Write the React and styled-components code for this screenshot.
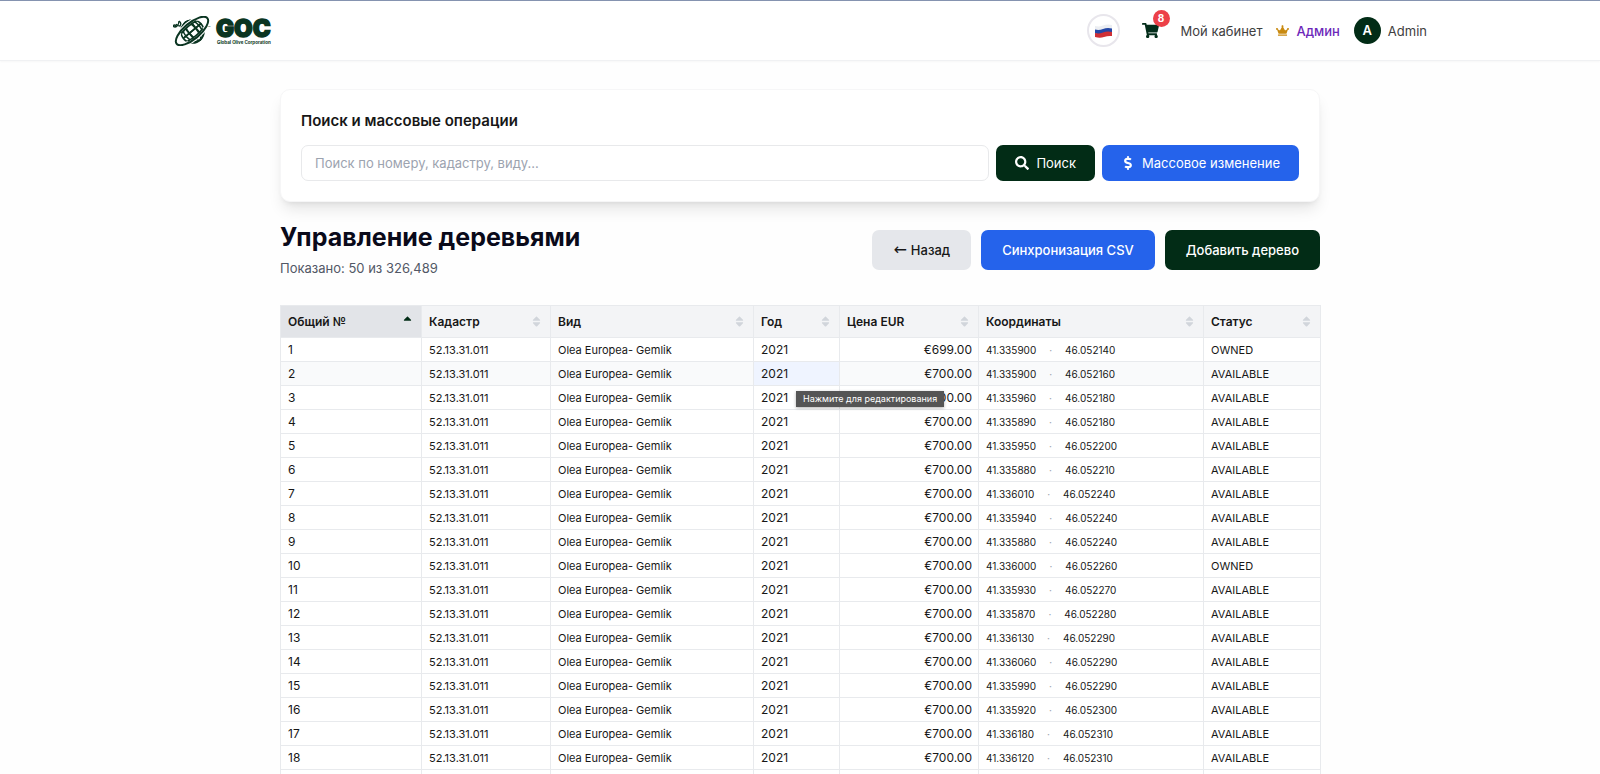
import React, { useState } from 'react';
import styled, { createGlobalStyle } from 'styled-components';
import { FaShoppingCart, FaCrown, FaSearch, FaDollarSign, FaSort, FaSortUp } from 'react-icons/fa';

const GlobalStyle = createGlobalStyle`
  * {
    box-sizing: border-box;
  }

  html {
    scrollbar-width: none;
  }

  body {
    margin: 0;
    background-color: #fefefe;
    color: #171717;
    font-family: Inter, "Liberation Sans", sans-serif;
    font-size: 13px;
  }

  button, input {
    font-family: inherit;
  }
`;

const Header = styled.header`
  border-top: 1px solid #8593b0;
  border-bottom: 1px solid #f0f1f3;
  background-color: #fff;
  box-shadow: 0 1px 2px rgba(0, 0, 0, 0.03);
`;

const HeaderInner = styled.div`
  max-width: 1254px;
  height: 59px;
  margin: 0 auto;
  display: flex;
  align-items: center;
  justify-content: space-between;
`;

const LogoLink = styled.a`
  display: flex;
`;

const Nav = styled.nav`
  display: flex;
  align-items: center;
  gap: 14px;
`;

const LanguageButton = styled.button`
  width: 33px;
  height: 33px;
  margin-right: 8px;
  padding: 0;
  display: flex;
  align-items: center;
  justify-content: center;
  border: 2px solid #e8e6ec;
  border-radius: 50%;
  background-color: #fff;
  cursor: pointer;
`;

const CartLink = styled.a`
  position: relative;
  display: flex;
  margin-right: 8px;
  color: #032d1a;
  font-size: 17px;
`;

const CartBadge = styled.span`
  position: absolute;
  top: -12px;
  right: -11px;
  width: 17px;
  height: 17px;
  border-radius: 50%;
  background-color: #ec4048;
  color: #fff;
  font-size: 10px;
  font-weight: 700;
  line-height: 17px;
  text-align: center;
`;

const NavLink = styled.a`
  display: flex;
  align-items: center;
  gap: 7px;
  color: ${(props) => (props.$admin ? '#6d28b9' : '#404040')};
  font-size: 13px;
  font-weight: ${(props) => (props.$admin ? 500 : 400)};
  text-decoration: none;

  svg {
    color: #c98a10;
  }
`;

const Avatar = styled.span`
  width: 27px;
  height: 27px;
  border-radius: 50%;
  background-color: #022c16;
  color: #fff;
  font-size: 13px;
  font-weight: 600;
  line-height: 27px;
  text-align: center;
`;

const Main = styled.main`
  max-width: 1040px;
  margin: 28px auto 0;
`;

const SearchCard = styled.section`
  padding: 20px;
  border: 1px solid #f6f6f7;
  border-radius: 10px;
  background-color: #fff;
  box-shadow: 0 10px 15px -3px rgba(0, 0, 0, 0.1), 0 4px 6px -4px rgba(0, 0, 0, 0.1);
`;

const CardTitle = styled.h2`
  margin: 0 0 14px;
  font-size: 15px;
  font-weight: 600;
  line-height: 21px;
`;

const SearchForm = styled.form`
  display: flex;
  gap: 7px;
`;

const SearchInput = styled.input`
  flex: 1;
  min-width: 0;
  height: 36px;
  padding: 0 13px;
  border: 1px solid #e8e9eb;
  border-radius: 7px;
  background-color: #fff;
  font-size: 13px;
  outline: none;

  &::placeholder {
    color: #9ca3af;
  }
`;

const colors = {
  green: 'background-color: #022c16; color: #fff;',
  blue: 'background-color: #2563eb; color: #fff;',
  gray: 'background-color: #e5e7eb; color: #171717;',
};

const Button = styled.button`
  height: ${(props) => (props.$large ? 40 : 36)}px;
  padding: 0 ${(props) => (props.$large ? 21 : 19)}px;
  display: flex;
  align-items: center;
  gap: ${(props) => (props.$large ? 4 : 7)}px;
  border: none;
  border-radius: 7px;
  font-size: 13px;
  font-weight: ${(props) => (props.$large ? 500 : 400)};
  white-space: nowrap;
  cursor: pointer;
  ${(props) => colors[props.$color]}

  svg {
    font-size: 14px;
  }
`;

const Arrow = styled.span`
  font-family: "DejaVu Sans", sans-serif;
  font-size: 16px;
  font-weight: 400;
  line-height: 18px;
`;

const PageHeader = styled.div`
  margin: 20px 0 27px;
  display: flex;
  align-items: center;
  justify-content: space-between;
`;

const PageTitle = styled.h1`
  margin: 0;
  color: #0a0a1a;
  font-size: 25px;
  font-weight: 700;
  line-height: 30px;
`;

const PageSubtitle = styled.p`
  margin: 6px 0 0;
  color: #525866;
  font-size: 13px;
  line-height: 20px;
`;

const Actions = styled.div`
  display: flex;
  gap: 10px;
`;

const Table = styled.table`
  width: 100%;
  table-layout: fixed;
  border-collapse: collapse;
`;

const HeadCell = styled.th`
  height: 32px;
  padding: 0 7px;
  border: 1px solid #e8eaed;
  background-color: ${(props) => (props.$active ? '#e2e4e8' : '#f3f4f6')};
  text-align: left;
`;

const SortButton = styled.button`
  width: 100%;
  padding: 0;
  display: flex;
  align-items: center;
  justify-content: space-between;
  border: none;
  background: none;
  color: inherit;
  font-size: 12px;
  font-weight: 600;
  cursor: pointer;

  svg {
    color: ${(props) => (props.$active ? '#022c16' : '#d1d5db')};
    font-size: 13px;
  }
`;

const Row = styled.tr`
  background-color: ${(props) => (props.$hovered ? '#f9fafb' : '#fff')};
`;

const Cell = styled.td`
  position: relative;
  height: 24px;
  padding: 0 6px 0 7px;
  border: 1px solid #e8eaed;
  background-color: ${(props) => (props.$hovered ? '#eff4ff' : 'transparent')};
  font-size: ${(props) => (props.$text ? 11 : 12)}px;
  line-height: 18px;
  text-align: ${(props) => (props.$right ? 'right' : 'left')};
  white-space: nowrap;
`;

const Coordinates = styled.div`
  display: flex;
  align-items: center;
  gap: 13px;
  font-size: 10px;
`;

const Dot = styled.span`
  color: #9ca3af;
`;

const Tooltip = styled.span`
  position: absolute;
  top: 29px;
  left: 42px;
  z-index: 1;
  height: 16px;
  padding: 0 7px;
  background-color: #555;
  box-shadow: 0 1px 3px rgba(0, 0, 0, 0.3);
  color: #fff;
  font-size: 9px;
  line-height: 16px;
`;

const columns = [
  { key: 'number', title: 'Общий №', width: 141 },
  { key: 'cadastre', title: 'Кадастр', width: 129 },
  { key: 'species', title: 'Вид', width: 203 },
  { key: 'year', title: 'Год', width: 86 },
  { key: 'price', title: 'Цена EUR', width: 139 },
  { key: 'coordinates', title: 'Координаты', width: 225 },
  { key: 'status', title: 'Статус', width: 117 },
];

const trees = [
  ['41.335900', '46.052140'],
  ['41.335900', '46.052160'],
  ['41.335960', '46.052180'],
  ['41.335890', '46.052180'],
  ['41.335950', '46.052200'],
  ['41.335880', '46.052210'],
  ['41.336010', '46.052240'],
  ['41.335940', '46.052240'],
  ['41.335880', '46.052240'],
  ['41.336000', '46.052260'],
  ['41.335930', '46.052270'],
  ['41.335870', '46.052280'],
  ['41.336130', '46.052290'],
  ['41.336060', '46.052290'],
  ['41.335990', '46.052290'],
  ['41.335920', '46.052300'],
  ['41.336180', '46.052310'],
  ['41.336120', '46.052310'],
  ['41.336050', '46.052310'],
].map(([lat, lng], index) => ({
  number: index + 1,
  cadastre: '52.13.31.011',
  species: 'Olea Europea- Gemlik',
  year: 2021,
  price: index === 0 ? '€699.00' : '€700.00',
  lat,
  lng,
  status: index === 0 || index === 9 ? 'OWNED' : 'AVAILABLE',
}));

const Logo = () => (
  <svg width="100" height="30" viewBox="0 0 100 30" role="img" aria-label="GOC">
    <g fill="none" stroke="#0b3522" strokeWidth="1.6">
      <circle cx="19.500" cy="15.500" r="11.500" />
      <g transform="rotate(-40 19 15)">
        <ellipse cx="19.500" cy="15.500" rx="4" ry="11.500" />
        <ellipse cx="19.500" cy="15.500" rx="8.500" ry="11.500" />
        <path d="M9.500 10q10 -3 20 0M8 15h23M9.500 21q10 3 20 0" />
        <ellipse cx="19" cy="15" rx="20" ry="8" stroke="#fff" strokeWidth="4" />
        <path d="M9 10q10 -2 20 0M8 15h23M9 20q10 2 20 0M15.500 9v13M24 9v13" />
        <ellipse cx="19" cy="15" rx="20" ry="8" strokeWidth="2" />
      </g>
      <path d="M3 10q-2 -2 -3 0q2 2 4 0q2 -2 2 -5M6 5q3 2 1 5q-3 0 -4 -2" strokeWidth="1.3" />
    </g>
    <text x="35" y="13" fill="#0b3522" fontSize="4">™</text>
    <text x="43" y="21" fill="#0b3522" stroke="#0b3522" strokeWidth="1.4" strokeLinejoin="miter" fontSize="24" fontWeight="900">GOC</text>
    <text x="44" y="28" fill="#0b3522" fontSize="4.500" fontWeight="700">Global Olive Corporation</text>
  </svg>
);

const Flag = () => (
  <svg width="19" height="14" viewBox="0 0 19 14" aria-hidden="true">
    <path d="M1 2Q5 3 9 1.500T18 1V5Q14 4.500 10 6T1 6Z" fill="#eceef2" />
    <path d="M1 5.500Q5 6.500 9 5T18 4.500V8.500Q14 8 10 9.500T1 9.500Z" fill="#2447a6" />
    <path d="M1 9Q5 10 9 8.500T18 8V12Q14 11.500 10 13T1 13Z" fill="#cf2f35" />
  </svg>
);

const App = () => {
  const [query, setQuery] = useState('');

  return (
    <>
      <GlobalStyle />
      <Header>
        <HeaderInner>
          <LogoLink href="/">
            <Logo />
          </LogoLink>
          <Nav>
            <LanguageButton type="button" aria-label="Русский">
              <Flag />
            </LanguageButton>
            <CartLink href="/cart" aria-label="Корзина">
              <FaShoppingCart />
              <CartBadge>8</CartBadge>
            </CartLink>
            <NavLink href="/account">Мой кабинет</NavLink>
            <NavLink href="/admin" $admin>
              <FaCrown />
              Админ
            </NavLink>
            <NavLink href="/profile">
              <Avatar>A</Avatar>
              Admin
            </NavLink>
          </Nav>
        </HeaderInner>
      </Header>
      <Main>
        <SearchCard>
          <CardTitle>Поиск и массовые операции</CardTitle>
          <SearchForm onSubmit={(e) => e.preventDefault()}>
            <SearchInput
              type="text"
              aria-label="Поиск"
              placeholder="Поиск по номеру, кадастру, виду..."
              value={query}
              onChange={(e) => setQuery(e.target.value)}
            />
            <Button type="submit" $color="green">
              <FaSearch />
              Поиск
            </Button>
            <Button type="button" $color="blue">
              <FaDollarSign />
              Массовое изменение
            </Button>
          </SearchForm>
        </SearchCard>
        <PageHeader>
          <div>
            <PageTitle>Управление деревьями</PageTitle>
            <PageSubtitle>Показано: 50 из 326,489</PageSubtitle>
          </div>
          <Actions>
            <Button type="button" $large $color="gray">
              <Arrow>←</Arrow>
              Назад
            </Button>
            <Button type="button" $large $color="blue">Синхронизация CSV</Button>
            <Button type="button" $large $color="green">Добавить дерево</Button>
          </Actions>
        </PageHeader>
        <Table>
          <colgroup>
            {columns.map((column) => (
              <col key={column.key} width={column.width} />
            ))}
          </colgroup>
          <thead>
            <tr>
              {columns.map((column, index) => (
                <HeadCell key={column.key} scope="col" $active={index === 0}>
                  <SortButton type="button" $active={index === 0}>
                    {column.title}
                    {index === 0 ? <FaSortUp /> : <FaSort />}
                  </SortButton>
                </HeadCell>
              ))}
            </tr>
          </thead>
          <tbody>
            {trees.map((tree) => (
              <Row key={tree.number} $hovered={tree.number === 2}>
                <Cell>{tree.number}</Cell>
                <Cell $text>{tree.cadastre}</Cell>
                <Cell $text>{tree.species}</Cell>
                <Cell $hovered={tree.number === 2}>
                  {tree.year}
                  {tree.number === 2 && <Tooltip role="tooltip">Нажмите для редактирования</Tooltip>}
                </Cell>
                <Cell $right>{tree.price}</Cell>
                <Cell>
                  <Coordinates>
                    <span>{tree.lat}</span>
                    <Dot>·</Dot>
                    <span>{tree.lng}</span>
                  </Coordinates>
                </Cell>
                <Cell $text>{tree.status}</Cell>
              </Row>
            ))}
          </tbody>
        </Table>
      </Main>
    </>
  );
};

export default App;
